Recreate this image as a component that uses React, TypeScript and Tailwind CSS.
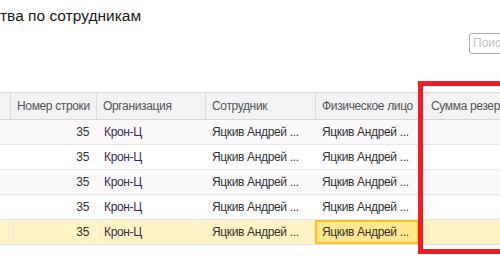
import React from 'react'

type Row = { num: string; org: string; emp: string; person: string; selected?: boolean }

const rows: Row[] = [
  { num: '35', org: 'Крон-Ц', emp: 'Яцкив Андрей ...', person: 'Яцкив Андрей ...' },
  { num: '35', org: 'Крон-Ц', emp: 'Яцкив Андрей ...', person: 'Яцкив Андрей ...' },
  { num: '35', org: 'Крон-Ц', emp: 'Яцкив Андрей ...', person: 'Яцкив Андрей ...' },
  { num: '35', org: 'Крон-Ц', emp: 'Яцкив Андрей ...', person: 'Яцкив Андрей ...' },
  { num: '35', org: 'Крон-Ц', emp: 'Яцкив Андрей ...', person: 'Яцкив Андрей ...', selected: true },
]

export default function App() {
  return (
    <div className="relative w-[500px] h-[271px] overflow-hidden bg-white font-['Liberation_Sans',Arial,sans-serif] text-[#333]">
      {/* Title, cut off on the left */}
      <div className="h-[33px] pt-[7px] text-[15.5px] leading-[18px] text-[#1a1a1a] whitespace-nowrap">
        тва по сотрудникам
      </div>

      {/* Search */}
      <div className="flex h-[21px] pl-[469px]">
        <div className="w-[80px] shrink-0 rounded-[3px] border border-[#a8a8a8] pl-[3px] text-[12px] leading-[19px] text-[#c2c2c2]">
          Поиск
        </div>
      </div>

      {/* Table */}
      <div className="mt-[38px] w-[560px] text-[12px] tracking-[-0.35px]">
        <div className="flex h-[28px] border-y border-[#d6d6d6] bg-[#f3f2f5] text-[#555] leading-[26px]">
          <div className="w-[10px] shrink-0" />
          <div className="w-[86px] shrink-0 border-l border-[#dcdcdc] pl-[6px] whitespace-nowrap">Номер строки</div>
          <div className="w-[109px] shrink-0 border-l border-[#dcdcdc] pl-[6px]">Организация</div>
          <div className="w-[110px] shrink-0 border-l border-[#dcdcdc] pl-[6px]">Сотрудник</div>
          <div className="w-[104px] shrink-0 border-l border-[#dcdcdc] pl-[6px] whitespace-nowrap">Физическое лицо</div>
          <div className="flex-1 border-l border-[#dcdcdc] pl-[11px] whitespace-nowrap">Сумма резерва</div>
        </div>

        {rows.map((r, i) => (
          <div
            key={i}
            className={
              'flex h-[25px] border-b leading-[24px] ' +
              (r.selected
                ? 'bg-[#fff2c4] border-[#e4e2dc]'
                : i % 2 === 0
                  ? 'bg-[#fcf9fd] border-[#e8e6ea]'
                  : 'bg-white border-[#e8e6ea]')
            }
          >
            <div className="w-[10px] shrink-0" />
            <div className={'w-[86px] shrink-0 border-l pr-[7px] text-right ' + (r.selected ? 'border-[#fffaeb]' : 'border-transparent')}>
              {r.num}
            </div>
            <div className={'w-[109px] shrink-0 border-l pl-[7px] text-[#3a2c4c] ' + (r.selected ? 'border-[#fffaeb]' : 'border-transparent')}>
              {r.org}
            </div>
            <div className={'w-[110px] shrink-0 border-l pl-[6px] whitespace-nowrap ' + (r.selected ? 'border-[#fffaeb]' : 'border-transparent')}>
              {r.emp}
            </div>
            {r.selected ? (
              <div className="w-[104px] shrink-0 border-2 border-[#f7c51e] bg-[#ffe68f] pl-[5px] leading-[20px] whitespace-nowrap">
                {r.person}
              </div>
            ) : (
              <div className="w-[104px] shrink-0 border-l border-transparent pl-[6px] whitespace-nowrap">{r.person}</div>
            )}
            <div className="flex-1" />
          </div>
        ))}
      </div>

      {/* Red highlight frame */}
      <div className="absolute left-[418px] top-[81px] w-[200px] h-[173px] border-[5px] border-[#ee1c25]" />
    </div>
  )
}
